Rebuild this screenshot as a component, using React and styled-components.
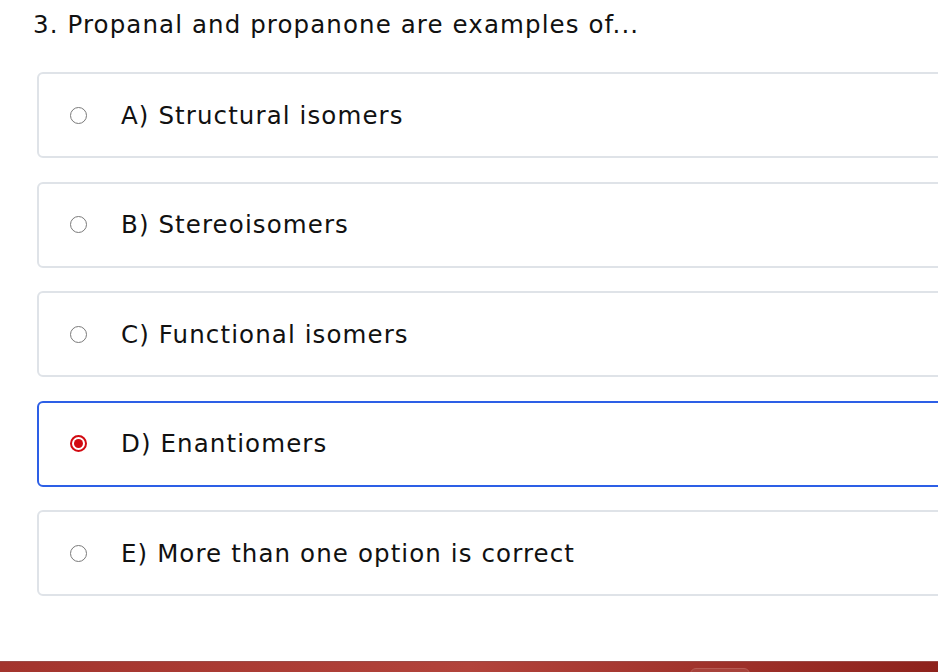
import React, { useState } from "react";
import styled, { createGlobalStyle } from "styled-components";

const Global = createGlobalStyle`
  html, body { margin: 0; padding: 0; background: #fff; overflow: hidden; }
  body { font-family: "DejaVu Sans", "Noto Sans", sans-serif; color: #111; }
`;

const Page = styled.div`
  width: 938px;
  height: 672px;
  display: flex;
  flex-direction: column;
  overflow: hidden;
`;

const Content = styled.div`
  flex: 1;
  padding: 8px 0 0 33px;
  display: flex;
  flex-direction: column;
`;

const Question = styled.h2`
  margin: 0 0 30px 0;
  font-size: 24.5px;
  font-weight: 400;
  line-height: 34px;
  letter-spacing: 1.1px;
  white-space: nowrap;
`;

const Options = styled.div`
  display: flex;
  flex-direction: column;
  gap: 23.5px;
  margin-left: 4px;
`;

const Card = styled.label`
  width: 960px;
  height: 86px;
  box-sizing: border-box;
  border: 2px solid ${(p) => (p.$selected ? "#2d5fe6" : "#dfe3e8")};
  border-radius: 6px;
  display: flex;
  align-items: center;
  padding-left: 31px;
  cursor: pointer;
`;

const Radio = styled.span`
  width: 17px;
  height: 17px;
  box-sizing: border-box;
  border-radius: 50%;
  border: ${(p) => (p.$checked ? "2px solid #d20a11" : "1.5px solid #7a7a7a")};
  display: flex;
  align-items: center;
  justify-content: center;
  flex-shrink: 0;
  &::after {
    content: "";
    display: ${(p) => (p.$checked ? "block" : "none")};
    width: 9px;
    height: 9px;
    border-radius: 50%;
    background: #d20a11;
  }
`;

const Label = styled.span`
  margin-left: 34px;
  font-size: 24.5px;
  letter-spacing: 1.1px;
  color: #111;
  white-space: nowrap;
`;

const Footer = styled.div`
  height: 10px;
  border-top: 1px solid #9a4a46;
  background: linear-gradient(90deg, #a3342d 0%, #b2433b 50%, #8e221c 100%);
  position: relative;
`;

const Tab = styled.div`
  position: absolute;
  left: 690px;
  top: 6px;
  width: 58px;
  height: 10px;
  border-radius: 6px 6px 0 0;
  background: #a8423b;
  border: 1px solid #b65a53;
`;

const items = [
  "A) Structural isomers",
  "B) Stereoisomers",
  "C) Functional isomers",
  "D) Enantiomers",
  "E) More than one option is correct",
];

export default function App() {
  const [sel, setSel] = useState(3);
  return (
    <Page>
      <Global />
      <Content>
        <Question>3. Propanal and propanone are examples of...</Question>
        <Options>
          {items.map((t, i) => (
            <Card key={t} $selected={sel === i} onClick={() => setSel(i)}>
              <Radio $checked={sel === i} />
              <Label>{t}</Label>
            </Card>
          ))}
        </Options>
      </Content>
      <Footer>
        <Tab />
      </Footer>
    </Page>
  );
}
